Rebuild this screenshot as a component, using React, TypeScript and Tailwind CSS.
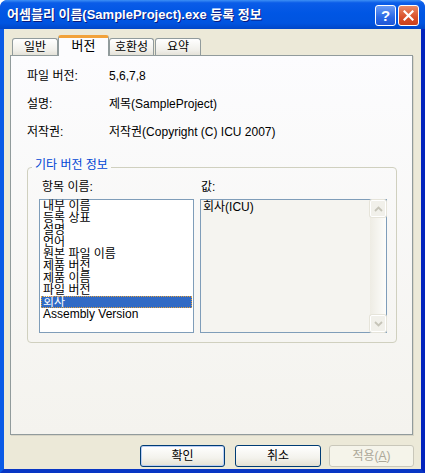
import React from "react";

const items = [
  "내부 이름",
  "등록 상표",
  "설명",
  "언어",
  "원본 파일 이름",
  "제품 버전",
  "제품 이름",
  "파일 버전",
  "회사",
  "Assembly Version",
];

const info = [
  ["파일 버전:", "5,6,7,8"],
  ["설명:", "제목(SampleProject)"],
  ["저작권:", "저작권(Copyright (C) ICU 2007)"],
];

function TitleBar() {
  return (
    <div className="h-[29px] shrink-0 flex items-center pl-[7px] pr-[6px] rounded-t-[7px] bg-[linear-gradient(to_bottom,#3d8ff5_0%,#0a5ce8_10%,#0056e4_45%,#0054e0_80%,#0046c8_100%)]">
      <span className="text-white font-bold text-[13px] leading-[16px] mt-[1px] [text-shadow:1px_1px_#0a1a80]">
        어셈블리 이름(SampleProject).exe 등록 정보
      </span>
      <div className="ml-auto flex gap-[2px] mt-[1px]">
        <div className="w-[21px] h-[21px] rounded-[3px] border border-white bg-[linear-gradient(to_bottom,#6b9cf5,#2a68e6_60%,#1f57d6)] flex items-center justify-center text-white font-bold text-[15px] leading-none">
          ?
        </div>
        <div className="w-[21px] h-[21px] rounded-[3px] border border-white bg-[linear-gradient(to_bottom,#ea8a66,#d9502a_60%,#c9401c)] flex items-center justify-center">
          <svg width="11" height="11" viewBox="0 0 11 11">
            <path d="M1.5 1.5 L9.5 9.5 M9.5 1.5 L1.5 9.5" stroke="#fff" strokeWidth="2.2" strokeLinecap="square" />
          </svg>
        </div>
      </div>
    </div>
  );
}

function Tab({ label, selected, width }: { label: string; selected?: boolean; width: string }) {
  if (selected) {
    return (
      <div className={`${width} h-[21px] -mb-px relative z-10 bg-[#fcfcfe] border-x border-[#919b9c] border-t-[3px] border-t-[#f2a23a] rounded-t-[3px] text-center leading-[15px] text-[13px]`}>
        {label}
      </div>
    );
  }
  return (
    <div className={`${width} h-[17px] border border-b-0 border-[#919b9c] rounded-t-[3px] bg-[linear-gradient(to_bottom,#ffffff,#f0efea_70%,#e4e2d8)] text-center leading-[16px]`}>
      {label}
    </div>
  );
}

function Chevron({ up }: { up?: boolean }) {
  return (
    <svg width="9" height="6" viewBox="0 0 9 6">
      <path
        d={up ? "M1 5 L4.5 1.5 L8 5" : "M1 1 L4.5 4.5 L8 1"}
        stroke="#c6c4b8"
        strokeWidth="1.8"
        fill="none"
      />
    </svg>
  );
}

export default function App() {
  return (
    <div className="w-[425px] h-[473px] flex flex-col bg-[#0a3cd0] rounded-t-[8px] text-[12px] text-black font-['Liberation_Sans','Noto_Sans_CJK_KR',sans-serif]">
      <TitleBar />
      <div className="flex-1 flex flex-col bg-[#ece9d8] border-l-4 border-r-4 border-b-4 border-l-[#0a5ae6] border-r-[#0223bd] border-b-[#0836c4]">
        <div className="pl-[6px] pt-[6px]">
          <div className="h-[20px] flex items-end pl-[2px]">
            <Tab label="일반" width="w-[46px]" />
            <Tab label="버전" width="w-[51px]" selected />
            <Tab label="호환성" width="w-[45px]" />
            <div className="ml-[1px]">
              <Tab label="요약" width="w-[46px]" />
            </div>
          </div>

          <div className="w-[403px] h-[380px] border border-[#919b9c] shadow-[1px_1px_0_#d8d5c6] bg-[linear-gradient(to_bottom,#fcfcfe,#f4f3ee)] pl-[16px] pt-[13px]">
            <div className="flex flex-col gap-[14px]">
              {info.map(([k, v]) => (
                <div key={k} className="flex leading-[14px]">
                  <span className="w-[82px]">{k}</span>
                  <span>{v}</span>
                </div>
              ))}
            </div>

            <fieldset className="mt-[19px] w-[370px] border border-[#d0d0bf] rounded-[4px]">
              <legend className="ml-[4px] px-[3px] pb-[4px] leading-[14px] text-[#0046d5]">기타 버전 정보</legend>
              <div className="pl-[11px] pr-[9px] pb-[9px] pt-[4px]">
                <div className="flex leading-[14px] mb-[5px]">
                  <span className="w-[161px] pl-[3px]">항목 이름:</span>
                  <span className="pl-[1px]">값:</span>
                </div>
                <div className="flex gap-[6px]">
                  <div className="w-[155px] h-[134px] border border-[#7f9db9] bg-white">
                    {items.map((it) => (
                      <div
                        key={it}
                        className={
                          it === "회사"
                            ? "mx-[1px] h-[12px] leading-[12px] px-[2px] bg-[#316ac5] text-white outline outline-1 outline-dotted outline-[#e0a040] -outline-offset-1"
                            : "h-[12px] leading-[12px] px-[3px] whitespace-nowrap"
                        }
                      >
                        {it}
                      </div>
                    ))}
                  </div>
                  <div className="w-[187px] h-[134px] border border-[#7f9db9] bg-[#f5f4f0] flex">
                    <span className="pl-[2px] pt-[1px] leading-[12px] flex-1">회사(ICU)</span>
                    <div className="w-[16px] flex flex-col bg-[linear-gradient(to_right,#eeece4,#fdfdfb)]">
                      <div className="h-[17px] border border-[#ffffff] rounded-[2px] bg-[#f1f0ea] shadow-[0_0_0_1px_#e6e4da] flex items-center justify-center">
                        <Chevron up />
                      </div>
                      <div className="flex-1" />
                      <div className="h-[17px] border border-[#ffffff] rounded-[2px] bg-[#f1f0ea] shadow-[0_0_0_1px_#e6e4da] flex items-center justify-center">
                        <Chevron />
                      </div>
                    </div>
                  </div>
                </div>
              </div>
            </fieldset>
          </div>
        </div>

        <div className="mt-[10px] flex justify-end pr-[7px]">
          <button className="w-[85px] h-[22px] rounded-[3px] border border-[#003c74] bg-[linear-gradient(to_bottom,#ffffff,#f3f2ec_60%,#e3e0d3)] shadow-[inset_0_0_0_1px_#b9cdf4] leading-[18px]">
            확인
          </button>
          <button className="ml-[10px] w-[86px] h-[22px] rounded-[3px] border border-[#003c74] bg-[linear-gradient(to_bottom,#ffffff,#f3f2ec_60%,#e3e0d3)] leading-[18px]">
            취소
          </button>
          <button className="ml-[8px] w-[85px] h-[22px] rounded-[3px] border border-[#c9c7ba] bg-[#f5f4ea] text-[#aca899] leading-[18px]">
            적용(<span className="underline">A</span>)
          </button>
        </div>
      </div>
    </div>
  );
}
